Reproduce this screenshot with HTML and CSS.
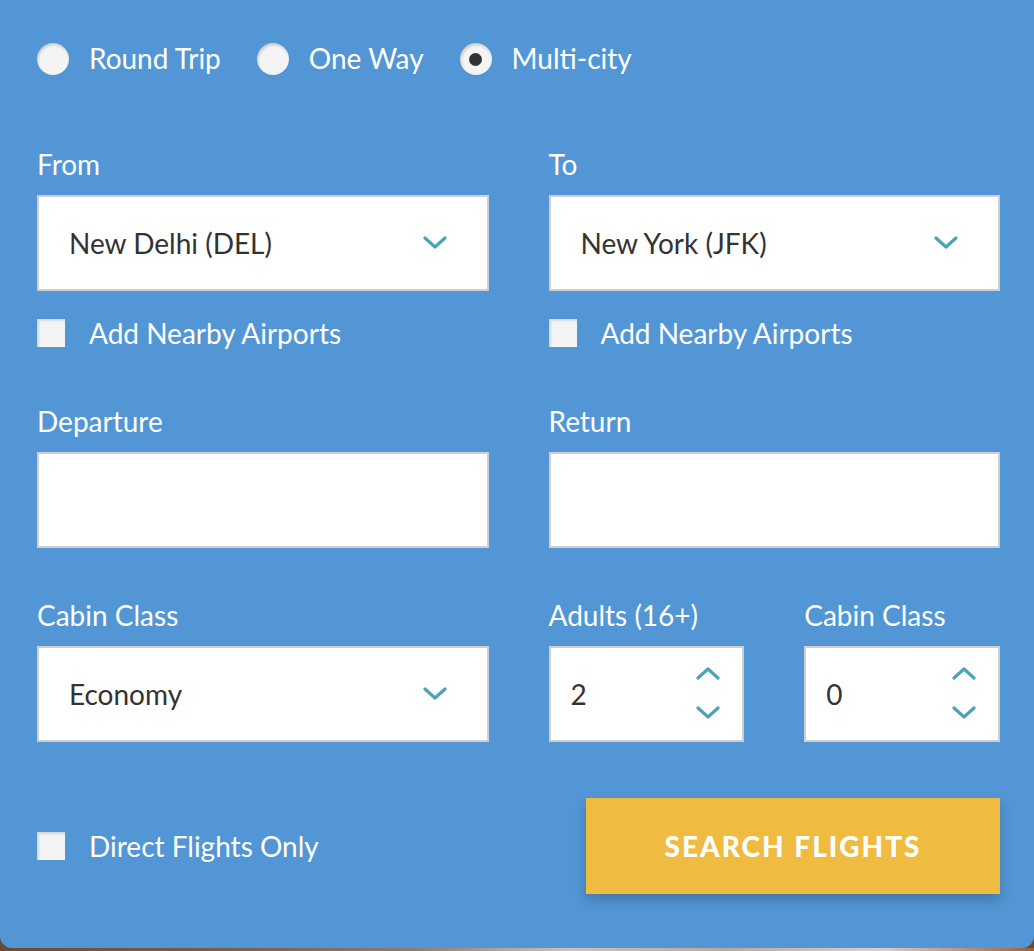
FILE: index.html
```html
<!DOCTYPE html>
<html>
<head>
<meta charset="utf-8">
<link rel="stylesheet" href="styles.css">
</head>
<body>
<div class="panel">
  <div class="trip-types">
    <label class="radio"><span class="dot"></span><span class="txt">Round Trip</span></label>
    <label class="radio"><span class="dot"></span><span class="txt">One Way</span></label>
    <label class="radio"><span class="dot checked"></span><span class="txt">Multi-city</span></label>
  </div>

  <div class="row row-places">
    <div class="field">
      <div class="label">From</div>
      <div class="box select"><span>New Delhi (DEL)</span>
        <svg class="chev" viewBox="0 0 24 14" width="24" height="14"><path d="M2 2 L12 11 L22 2" fill="none" stroke="#4ba3ba" stroke-width="3.2" stroke-linecap="round" stroke-linejoin="round"/></svg>
      </div>
      <label class="check"><span class="cb"></span><span>Add Nearby Airports</span></label>
    </div>
    <div class="field">
      <div class="label">To</div>
      <div class="box select"><span>New York (JFK)</span>
        <svg class="chev" viewBox="0 0 24 14" width="24" height="14"><path d="M2 2 L12 11 L22 2" fill="none" stroke="#4ba3ba" stroke-width="3.2" stroke-linecap="round" stroke-linejoin="round"/></svg>
      </div>
      <label class="check"><span class="cb"></span><span>Add Nearby Airports</span></label>
    </div>
  </div>

  <div class="row row-dates">
    <div class="field">
      <div class="label">Departure</div>
      <div class="box"></div>
    </div>
    <div class="field">
      <div class="label">Return</div>
      <div class="box"></div>
    </div>
  </div>

  <div class="row row-class">
    <div class="field">
      <div class="label">Cabin Class</div>
      <div class="box select"><span>Economy</span>
        <svg class="chev" viewBox="0 0 24 14" width="24" height="14"><path d="M2 2 L12 11 L22 2" fill="none" stroke="#4ba3ba" stroke-width="3.2" stroke-linecap="round" stroke-linejoin="round"/></svg>
      </div>
    </div>
    <div class="field pair">
      <div class="field">
        <div class="label">Adults (16+)</div>
        <div class="box number"><span>2</span>
          <span class="spin">
            <svg viewBox="0 0 24 14" width="24" height="14"><path d="M2 12 L12 3 L22 12" fill="none" stroke="#4ba3ba" stroke-width="3.2" stroke-linecap="round" stroke-linejoin="round"/></svg>
            <svg viewBox="0 0 24 14" width="24" height="14"><path d="M2 2 L12 11 L22 2" fill="none" stroke="#4ba3ba" stroke-width="3.2" stroke-linecap="round" stroke-linejoin="round"/></svg>
          </span>
        </div>
      </div>
      <div class="field">
        <div class="label">Cabin Class</div>
        <div class="box number"><span>0</span>
          <span class="spin">
            <svg viewBox="0 0 24 14" width="24" height="14"><path d="M2 12 L12 3 L22 12" fill="none" stroke="#4ba3ba" stroke-width="3.2" stroke-linecap="round" stroke-linejoin="round"/></svg>
            <svg viewBox="0 0 24 14" width="24" height="14"><path d="M2 2 L12 11 L22 2" fill="none" stroke="#4ba3ba" stroke-width="3.2" stroke-linecap="round" stroke-linejoin="round"/></svg>
          </span>
        </div>
      </div>
    </div>
  </div>

  <div class="row row-bottom">
    <label class="check direct"><span class="cb"></span><span>Direct Flights Only</span></label>
    <button class="search">SEARCH FLIGHTS</button>
  </div>
</div>
<div class="strip"></div>
</body>
</html>
```

FILE: styles.css
```css
html, body {
  margin: 0;
  padding: 0;
  background: #6b4a36;
  height: 951px;
  overflow: hidden;
}
body {
  font-family: Lato, "Open Sans", sans-serif;
}
.panel {
  background: #5296d5;
  height: 948px;
  box-sizing: border-box;
  padding: 43px 34px 0 37px;
  border-radius: 0 0 12px 12px;
  color: #fff;
}
.strip {
  height: 3px;
  background: linear-gradient(90deg, #6a4a38 0%, #7a5a48 20%, #8d7b70 40%, #c9c2bf 55%, #b9a89f 70%, #d7d0d0 85%, #a0603a 100%);
}
.trip-types {
  display: flex;
  align-items: center;
  height: 32px;
  font-size: 28px;
}
.radio {
  display: flex;
  align-items: center;
  margin-right: 36px;
}
.txt {
  line-height: 30px;
  padding-bottom: 2px;
}
.dot {
  width: 32px;
  height: 32px;
  border-radius: 50%;
  background: #f4f4f4;
  box-shadow: inset 1px 2px 3px rgba(0,0,0,0.18);
  margin-right: 20px;
  display: flex;
  align-items: center;
  justify-content: center;
}
.dot.checked::after {
  content: "";
  width: 13px;
  height: 13px;
  border-radius: 50%;
  background: #333;
}
.row {
  display: flex;
  gap: 60px;
}
.row > .field {
  flex: 1 1 0;
  min-width: 0;
}
.row-places { margin-top: 75px; }
.row-dates { margin-top: 59px; }
.row-class { margin-top: 53px; }
.label {
  font-size: 28px;
  line-height: 28px;
  height: 30px;
  margin-bottom: 15px;
}
.box {
  height: 96px;
  background: #fff;
  border: 2px solid #cfcfcf;
  box-sizing: border-box;
  color: #333;
  font-size: 28px;
  display: flex;
  align-items: center;
  justify-content: space-between;
}
.select {
  padding: 0 40px 0 30px;
}
.chev { display: block; }
.pair {
  display: flex;
  gap: 60px;
}
.pair > .field {
  flex: 1 1 0;
  min-width: 0;
}
.number {
  padding: 0 22px 0 20px;
}
.spin {
  display: flex;
  flex-direction: column;
  gap: 26px;
  margin-top: -3px;
}
.spin svg { display: block; }
.check {
  display: flex;
  align-items: center;
  margin-top: 27px;
  font-size: 28px;
  height: 30px;
}
.cb {
  width: 28px;
  height: 28px;
  background: #f4f4f4;
  box-shadow: inset 2px 2px 2px rgba(0,0,0,0.12);
  margin-right: 24px;
  flex: none;
}
.row-bottom {
  margin-top: 56px;
  justify-content: space-between;
  align-items: center;
}
.direct { margin-top: 0; }
.search {
  width: 414px;
  height: 96px;
  background: #efbb40;
  border: none;
  color: #fff;
  font-family: Lato, "Open Sans", sans-serif;
  font-weight: 900;
  font-size: 28px;
  letter-spacing: 2px;
  box-shadow: 0 6px 12px rgba(0,0,0,0.2);
  margin-top: 0;
  padding: 0;
}
```
